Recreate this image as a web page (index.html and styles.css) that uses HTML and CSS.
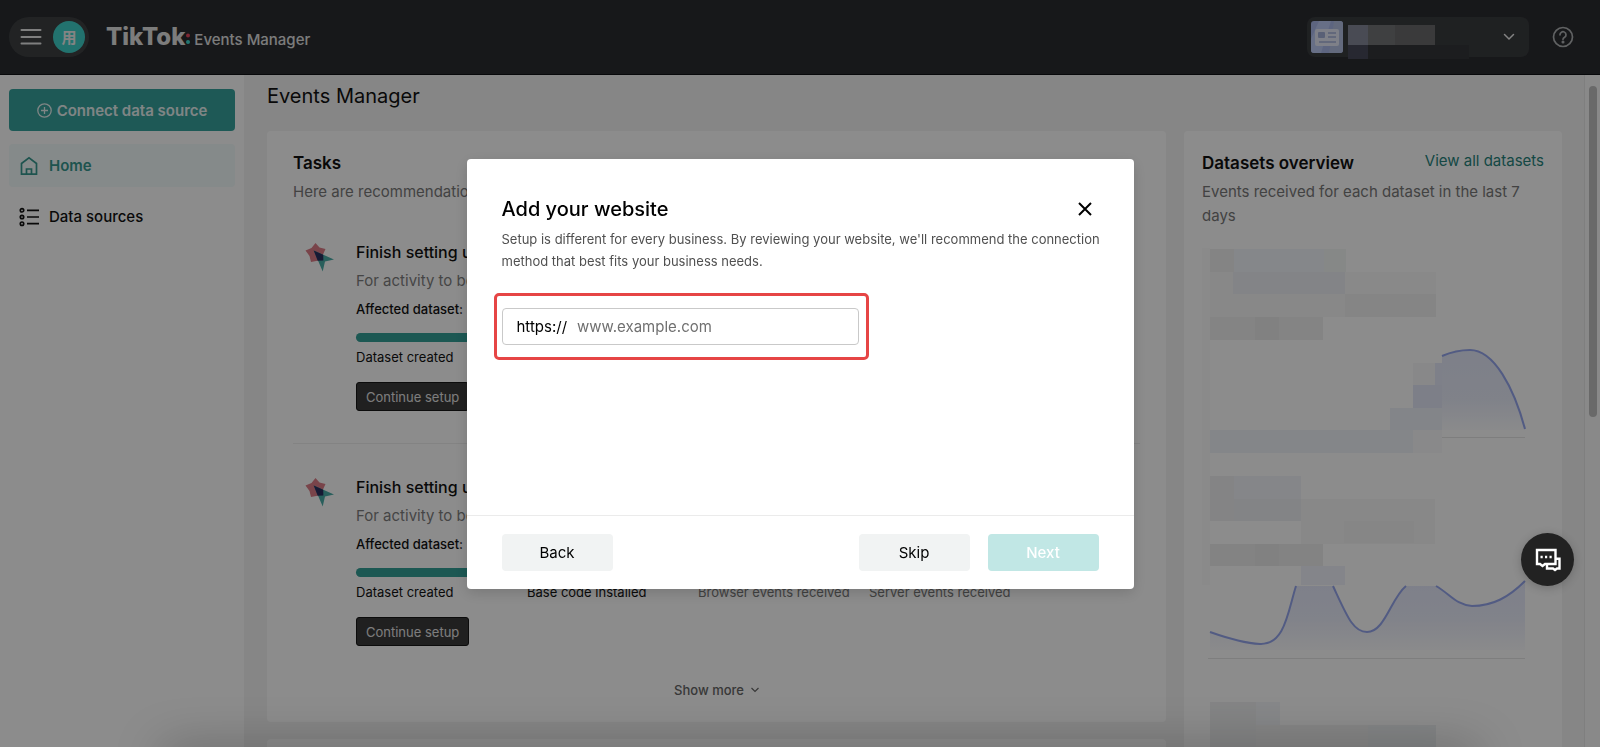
FILE: index.html
```
<!DOCTYPE html>
<html lang="en">
<head>
<meta charset="utf-8">
<title>TikTok Events Manager</title>
<link rel="stylesheet" href="styles.css">
</head>
<body>
<div class="app">
  <header class="topbar">
    <div class="user-pill">
      <button class="menu-btn" type="button" aria-label="Menu">
        <svg width="22" height="18" viewBox="0 0 22 18" fill="none" stroke="currentColor" stroke-width="2" stroke-linecap="round"><path d="M1.5 2h19M1.5 9h19M1.5 15.500h19"/></svg>
      </button>
      <span class="avatar">用</span>
    </div>
    <div class="brand">
      <span class="brand-name">TikTok</span>
      <svg class="brand-dots" width="4" height="12" viewBox="0 0 4 12"><circle cx="2" cy="2.500" r="2" fill="#e8475c"/><circle cx="2" cy="9" r="2" fill="#3fd8d0"/></svg>
      <span class="brand-product">Events Manager</span>
    </div>
    <button class="account" type="button" aria-label="Account">
      <svg width="32" height="32" viewBox="0 0 32 32"><rect width="32" height="32" rx="3" fill="#a9b9ea"/><path d="M8 0h12L10 32H3a3 3 0 0 1-3-3V18z" fill="#bccaf5"/><path d="M23 0h6a3 3 0 0 1 3 3v26a3 3 0 0 1-3 3H18z" fill="#b4c1e4"/><rect x="4" y="8" width="24" height="17" rx="2" fill="#e6eaf8"/><rect x="7" y="11" width="7" height="6" rx="1" fill="#a3afd8"/><path d="M17 12h8M17 16h8M8 21h17" stroke="#a3afd8" stroke-width="1.500"/></svg>
      <svg class="account-name" width="122" height="34" viewBox="0 0 122 34"><path d="M20 20h101v14H20z" fill="#34363a"/><path d="M0 0h20v20H0z" fill="#86899a"/><path d="M20 0h27v20H20z" fill="#747577"/><path d="M47 0h40v20H47z" fill="#6a6b6c"/><path d="M0 20h20v14H0z" fill="#484a5a"/></svg>
      <svg class="account-caret" width="12" height="8" viewBox="0 0 12 8" fill="none" stroke="currentColor" stroke-width="1.500" stroke-linecap="round"><path d="M1.500 1.500 6 6l4.500-4.500"/></svg>
    </button>
    <button class="help" type="button" aria-label="Help">
      <svg width="22" height="22" viewBox="0 0 22 22" fill="none" stroke="currentColor" stroke-width="1.700" stroke-linecap="round"><circle cx="11" cy="11" r="9.500"/><path d="M8 8.800a3 3 0 1 1 4.600 2.500c-1.100.7-1.600 1.100-1.600 2"/><circle cx="11" cy="16" r=".7" fill="currentColor"/></svg>
    </button>
  </header>

  <div class="body">
    <nav class="sidebar">
      <button class="connect" type="button">
        <svg width="15" height="15" viewBox="0 0 15 15" fill="none" stroke="currentColor" stroke-width="1.300"><circle cx="7.500" cy="7.500" r="6.700"/><path d="M7.500 4v7M4 7.500h7"/></svg>
        Connect data source
      </button>
      <a class="nav-item active" href="#">
        <svg width="20" height="20" viewBox="0 0 20 20" fill="none" stroke="currentColor" stroke-width="1.700"><path d="M2.500 7.500 10 1.800l7.500 5.700v10.700h-15z"/><path d="M7.500 18v-5h5v5"/></svg>
        Home
      </a>
      <a class="nav-item" href="#">
        <svg width="20" height="20" viewBox="0 0 20 20" fill="none" stroke="currentColor" stroke-width="1.700"><circle cx="3" cy="3.300" r="1.700"/><circle cx="3" cy="10" r="1.700"/><circle cx="3" cy="16.700" r="1.700"/><path d="M8 3.300h12M8 10h12M8 16.700h12"/></svg>
        Data sources
      </a>
    </nav>

    <main class="main">
      <h1 class="page-title">Events Manager</h1>
      <div class="columns">
        <div class="col-tasks">
          <section class="card tasks">
            <h2>Tasks</h2>
            <p class="sub">Here are recommendations</p>
            <article class="task">
              <svg class="task-icon" width="29" height="29" viewBox="-1 0 29 29"><path d="m9.500 0 4 4.500 6 1.500-2.500 5.500.5 6-6 .2L5 19l-1.500-6L-.5 7.500 5.500 5z" fill="#dc7d87"/><path d="m7.700 7.500 20.300 9-9 2-2.300 10z" fill="#4cada8"/><path d="m7.700 7.500 9.500 4.200.2 5.800-5.700.2z" fill="#2a3160"/></svg>
              <div>
                <h3>Finish setting up</h3>
                <p class="desc">For activity to be</p>
                <p class="affected">Affected dataset:</p>
                <div class="bar"><div class="bar-fill" style="width:50%"></div></div>
                <div class="steps"><span>Dataset created</span></div>
                <button class="continue" type="button">Continue setup</button>
              </div>
            </article>
            <article class="task">
              <svg class="task-icon" width="29" height="29" viewBox="-1 0 29 29"><path d="m9.500 0 4 4.500 6 1.500-2.500 5.500.5 6-6 .2L5 19l-1.500-6L-.5 7.500 5.500 5z" fill="#dc7d87"/><path d="m7.700 7.500 20.300 9-9 2-2.300 10z" fill="#4cada8"/><path d="m7.700 7.500 9.500 4.200.2 5.800-5.700.2z" fill="#2a3160"/></svg>
              <div>
                <h3>Finish setting up</h3>
                <p class="desc">For activity to be</p>
                <p class="affected">Affected dataset:</p>
                <div class="bar"><div class="bar-fill" style="width:50%"></div></div>
                <div class="steps"><span>Dataset created</span><span>Base code installed</span><span class="todo">Browser events received</span><span class="todo">Server events received</span></div>
                <button class="continue" type="button">Continue setup</button>
              </div>
            </article>
            <button class="more" type="button">Show more
              <svg width="8" height="6" viewBox="0 0 8 6" fill="none" stroke="currentColor" stroke-width="1.200"><path d="M.5 1 4 4.500 7.500 1"/></svg>
            </button>
          </section>
          <section class="card next-card"></section>
        </div>
        <section class="card datasets">
          <div class="datasets-head">
            <h2>Datasets overview</h2>
            <a href="#">View all datasets</a>
          </div>
          <p class="sub">Events received for each dataset in the last 7 days</p>
          <svg class="charts" viewBox="1202 230 342 517" role="img" aria-label="Events received">
            <defs>
              <linearGradient id="g1" gradientUnits="userSpaceOnUse" x1="0" y1="350" x2="0" y2="432"><stop offset="0" stop-color="#e4e9fa"/><stop offset=".6" stop-color="#e9edfa"/><stop offset="1" stop-color="#fdfdff"/></linearGradient>
              <linearGradient id="g2" gradientUnits="userSpaceOnUse" x1="0" y1="585" x2="0" y2="652"><stop offset="0" stop-color="#e6eafb"/><stop offset=".5" stop-color="#ebeefb"/><stop offset="1" stop-color="#fdfdff"/></linearGradient>
            </defs>
            <g>
              <path d="M1202 248h8v337h-8z" fill="#fbfbfb"/>
              <path d="M1210 249h24v23h-24z" fill="#f0f0f0"/>
              <path d="M1234 249h90v23h-90z" fill="#f3f6fc"/>
              <path d="M1324 249h22v23h-22z" fill="#f4f8f6"/>
              <path d="M1210 272h23v46h-23z" fill="#f7f7f7"/>
              <path d="M1233 272h112v22h-112z" fill="#eef1f6"/>
              <path d="M1233 294h112v23h-112z" fill="#f8f8f8"/>
              <path d="M1345 272h91v22h-91z" fill="#f9f9f9"/>
              <path d="M1345 294h91v23h-91z" fill="#f2f2f2"/>
              <path d="M1210 317h113v23h-113z" fill="#f0f0f0"/>
              <path d="M1255 317h24v23h-24z" fill="#ebebeb"/>
              <path d="M1413 363h22v22h-22z" fill="#f8f8fa"/>
              <path d="M1435 363h7v22h-7z" fill="#e6eafa"/>
              <path d="M1413 385h29v23h-29z" fill="#e4e8f7"/>
              <path d="M1390 408h52v23h-52z" fill="#eff2f9"/>
              <path d="M1210 430h203v23h-203z" fill="#f1f4fa"/>
              <path d="M1413 430h29v23h-29z" fill="#fafafc"/>
            </g>
            <path d="M1442 356c14-6 22-6 28-6 24 0 44 38 55 79v1h-83z" fill="url(#g1)"/>
            <path d="M1442 356c14-6 22-6 28-6 24 0 44 38 55 79" fill="none" stroke="#96a7ee" stroke-width="2"/>
            <path d="M1442 437.500h83" stroke="#e6e6e6"/>
            <g>
              <path d="M1210 476h24v45h-24z" fill="#f0f1f2"/>
              <path d="M1234 476h67v23h-67z" fill="#f2f5fa"/>
              <path d="M1234 499h67v22h-67z" fill="#eff1f4"/>
              <path d="M1301 499h134v45h-134z" fill="#f8f8f8"/>
              <path d="M1344 521h70v22h-70z" fill="#f4f4f4"/>
              <path d="M1210 544h113v22h-113z" fill="#efefef"/>
              <path d="M1255 544h24v22h-24z" fill="#ebebeb"/>
              <path d="M1301 566h44v19h-44z" fill="#f1f3fb"/>
            </g>
            <path d="M1210 632q31 11 50 12c25 1 28-33 36-58h37c14 30 20 46 34 46 18 0 24-34 39-46h30c14 8 20 19 36 20 21 0 37-9 53-25v69h-315z" fill="url(#g2)"/>
            <path d="M1210 632q31 11 50 12c25 1 28-33 36-58M1333 586c14 30 20 46 34 46 18 0 24-34 39-46M1436 586c14 8 20 19 36 20 21 0 37-9 53-25" fill="none" stroke="#96a7ee" stroke-width="2"/>
            <path d="M1208 658.500h317" stroke="#e6e6e6"/>
            <path d="M1210 702h46v45h-46z" fill="#f0f1f2"/>
            <path d="M1256 702h24v23h-24z" fill="#f4f6f9"/>
            <path d="M1256 725h112v22h-112z" fill="#f3f3f3"/>
            <path d="M1368 725h68v22h-68z" fill="#eff2f4"/>
          </svg>
        </section>
      </div>
    </main>
    <div class="scroll"><div class="thumb"></div></div>
  </div>
  <div class="window-shade"></div>
</div>

<div class="backdrop">
  <div class="dialog" role="dialog" aria-labelledby="dlg-title">
    <div class="dialog-body">
      <div class="dialog-head">
        <h2 id="dlg-title">Add your website</h2>
        <button class="close" type="button" aria-label="Close">
          <svg width="14" height="14" viewBox="0 0 14 14" fill="none" stroke="currentColor" stroke-width="2"><path d="m1 1 12 12M13 1 1 13"/></svg>
        </button>
      </div>
      <p>Setup is different for every business. By reviewing your website, we'll recommend the connection method that best fits your business needs.</p>
      <div class="highlight">
        <div class="field">
          <label for="site">https://</label>
          <input id="site" type="text" placeholder="www.example.com">
        </div>
      </div>
    </div>
    <div class="dialog-foot">
      <button class="btn" type="button">Back</button>
      <span class="spacer"></span>
      <button class="btn" type="button">Skip</button>
      <button class="btn primary" type="button" disabled>Next</button>
    </div>
  </div>
</div>

<button class="chat" type="button" aria-label="Chat">
  <svg width="26" height="24" viewBox="0 0 26 24" fill="none" stroke="currentColor" stroke-width="2.400"><path d="M2 2h18.500v14H10l-2.500 2L5 16H2z"/><path d="M21 10.800h3.500V20.500H22l-2 1.500-2-1.500h-6V16"/><path d="M5.500 9h2.200M10 9h2.200M14.500 9h2.200"/></svg>
</button>
</body>
</html>
```
FILE: styles.css
```
* { box-sizing: border-box; }
body { margin: 0; font-family: Inter, "Liberation Sans", sans-serif; font-size: 15px; color: #121212; }
h1, h2, h3, p { margin: 0; }
button { font: inherit; color: inherit; border: 0; background: none; padding: 0; display: flex; align-items: center; }
a { text-decoration: none; color: inherit; }
svg { display: block; flex: none; }

.app { height: 100vh; overflow: hidden; display: flex; flex-direction: column; background: #f4f4f4; position: relative; }

.topbar { height: 75px; flex: none; display: flex; align-items: center; padding: 0 26px 0 9px; background: #2a2c30; border-bottom: 1px solid #101214; color: #fff; }
.user-pill { display: flex; align-items: center; gap: 11px; height: 40px; width: 80px; padding: 0 4px 0 11px; border-radius: 20px; background: #3e4143; }
.menu-btn { color: #e8e8e8; }
.avatar { width: 32px; height: 32px; border-radius: 50%; background: #3fd0c8; display: grid; place-items: center; font: 700 15px/32px "Noto Sans CJK SC", sans-serif; color: #f0f0f0; }
.brand { display: flex; align-items: center; margin-left: 17px; color: #e2e2e2; }
.brand-name { font-size: 24px; font-weight: 800; line-height: 32px; }
.brand-dots { margin: 4px 4px 0 1px; }
.brand-product { font-size: 15px; font-weight: 500; line-height: 20px; padding-top: 6px; }
.account { margin-left: auto; width: 222px; height: 40px; border-radius: 8px; background: #3a3c3f; padding: 0 14px 0 4px; gap: 5px; }
.account-name { margin-top: 10px; }
.account-caret { margin-left: auto; color: #eee; }
.help { margin-left: 23px; color: #b0b2b4; }

.body { flex: 1; min-height: 0; display: flex; }
.sidebar { width: 244px; flex: none; background: #fff; padding: 14px 9px; display: flex; flex-direction: column; }
.connect { height: 42px; border-radius: 4px; background: #38a39d; color: #e8f2f2; justify-content: center; gap: 5px; font-weight: 600; margin-bottom: 13px; }
.nav-item { height: 43px; border-radius: 4px; display: flex; align-items: center; gap: 10px; padding-left: 10px; font-weight: 500; margin-bottom: 8px; }
.nav-item.active { background: #f3fcfb; color: #389990; font-weight: 600; }

.main { flex: 1; min-width: 0; padding: 9px 22px 0 23px; }
.page-title { font-size: 20px; font-weight: 400; line-height: 24px; margin-bottom: 23px; }
.columns { display: flex; gap: 18px; }
.col-tasks { flex: 1; min-width: 0; display: flex; flex-direction: column; gap: 17px; }
.card { background: #fff; border-radius: 4px; }
.card h2 { font-size: 17px; font-weight: 600; line-height: 24px; }
.sub { color: #797979; line-height: 24px; }
.tasks { padding: 20px 26px 0; height: 591px; }
.tasks .sub { margin-top: 5px; }
.task { display: flex; gap: 22px; padding: 36px 0 32px 12px; }
.task + .task { border-top: 1px solid #eee; padding-top: 31px; padding-bottom: 0; }
.task > div { width: 684px; }
.task-icon { margin-top: 3px; }
.task h3 { font-size: 16px; font-weight: 500; line-height: 24px; }
.desc { color: #7f7f7f; line-height: 24px; margin-top: 5px; }
.affected { font-size: 13px; font-weight: 500; line-height: 20px; margin-top: 6px; }
.bar { height: 9px; border-radius: 5px; background: #e6e6e6; margin-top: 14px; }
.bar-fill { height: 9px; border-radius: 5px; background: #33a098; }
.steps { display: grid; grid-template-columns: repeat(4, 1fr); font-size: 13px; line-height: 20px; margin-top: 5px; white-space: nowrap; }
.steps .todo { color: #777; }
.continue { height: 29px; border-radius: 3px; background: #3b3b3b; border: 1px solid #161616; color: #e4e4e4; font-size: 13px; padding: 0 9px; margin-top: 15px; }
.more { margin: 34px auto 0; gap: 7px; font-size: 13px; font-weight: 500; line-height: 20px; color: #666; }
.next-card { height: 120px; }

.datasets { width: 378px; flex: none; padding: 20px 18px 0; height: 800px; }
.datasets-head { display: flex; justify-content: space-between; white-space: nowrap; }
.datasets-head a { color: #27847c; line-height: 20px; }
.datasets .sub { margin-top: 5px; }
.charts { width: 100%; margin-top: 2px; }

.scroll { width: 16px; flex: none; padding: 11px 3px 0 4px; background: #fafafa; border-left: 1px solid #e8e8e8; }
.thumb { height: 50%; width: 8px; border-radius: 4px; background: #bfbfbf; }

.window-shade { position: absolute; left: 170px; right: 130px; bottom: -20px; height: 10px; box-shadow: 0 0 50px 8px rgba(0, 0, 0, .32); }

.backdrop { position: fixed; inset: 0; background: rgba(0, 0, 0, .45); display: grid; place-items: center; }
.dialog { width: 667px; height: 430px; background: #fff; border-radius: 4px; display: flex; flex-direction: column; color: #000; box-shadow: 0 4px 14px rgba(0, 0, 0, .15); }
.dialog-body { flex: 1; padding: 38px 24px 0 35px; }
.dialog-head { display: flex; align-items: center; justify-content: space-between; padding-right: 18px; }
.dialog h2 { font-size: 20px; font-weight: 500; line-height: 24px; }
.dialog p { font-size: 13px; line-height: 22px; color: #505050; margin-top: 7px; }
.highlight { width: 375px; margin: 21px -8px 0; padding: 12px 7px 12px 5px; border: 3px solid #e64545; border-radius: 5px; }
.field { height: 37px; display: flex; align-items: center; border: 1px solid #c9c9c9; border-radius: 4px; padding: 0 14px; gap: 10px; }
.field input { flex: 1; min-width: 0; border: 0; outline: 0; padding: 0; font: inherit; background: none; }
.field input::placeholder { color: #707070; opacity: 1; }
.dialog-foot { border-top: 1px solid #ebebeb; display: flex; gap: 18px; padding: 18px 35px; }
.spacer { flex: 1; }
.btn { width: 111px; height: 37px; border-radius: 4px; background: #f1f3f3; justify-content: center; }
.btn.primary { background: #c1e7e5; color: #fff; font-weight: 500; }

.chat { position: fixed; right: 26px; bottom: 161px; width: 53px; height: 53px; border-radius: 50%; background: #222; color: #fff; justify-content: center; box-shadow: 0 2px 10px rgba(0, 0, 0, .2); }
```
